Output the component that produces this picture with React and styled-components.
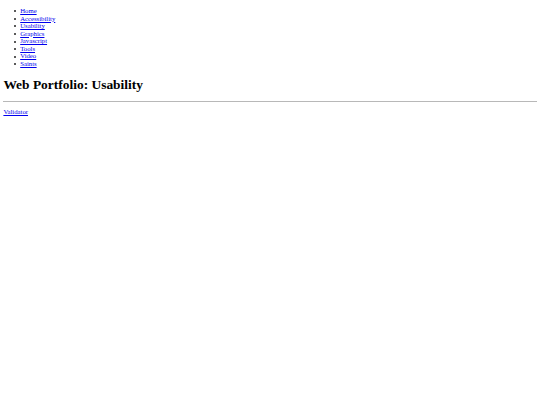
import React from "react"
import styled, { createGlobalStyle } from "styled-components"

// the reference is a plain default-styled page shown at about 0.42 scale
const GlobalStyle = createGlobalStyle`
  html, body {
    background: #fff;
  }
  body {
    margin: 3.4px;
    font-family: "Liberation Serif", "Times New Roman", serif;
    font-size: 6.72px;
    color: #000;
  }
  a {
    color: #0000ee;
  }
`

const Nav = styled.ul`
  margin: 3.7px 0 6.7px;
  padding-left: 16.8px;
  list-style: none;
`

const Item = styled.li`
  position: relative;
  line-height: 7.57px;

  &::before {
    content: "";
    position: absolute;
    left: -6.6px;
    top: 3.2px;
    width: 2px;
    height: 2px;
    border-radius: 50%;
    background: #222;
  }
`

const Title = styled.h1`
  font-size: 13.44px;
  font-weight: bold;
  margin: 9px 0;
  line-height: 1.15;
`

const Rule = styled.hr`
  margin: 3.4px 0;
  border: none;
  border-top: 1px solid #b8b8b8;
  height: 0;
`

const Footer = styled.div`
  line-height: 7.57px;
  padding-top: 3px;
`

const links = [
  "Home",
  "Accessibility",
  "Usability",
  "Graphics",
  "Javascript",
  "Tools",
  "Video",
  "Saints",
]

export default function App() {
  return (
    <>
      <GlobalStyle />
      <Nav>
        {links.map((name) => (
          <Item key={name}>
            <a href="#">{name}</a>
          </Item>
        ))}
      </Nav>
      <Title>Web Portfolio: Usability</Title>
      <Rule />
      <Footer>
        <a href="#">Validator</a>
      </Footer>
    </>
  )
}
